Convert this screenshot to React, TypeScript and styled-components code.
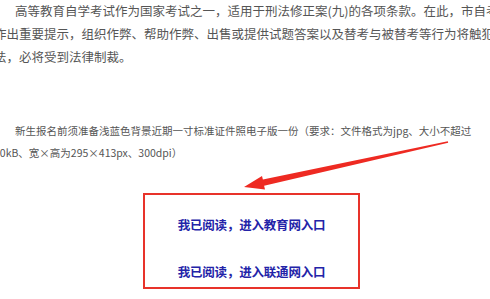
import React from 'react';
import styled, { createGlobalStyle } from 'styled-components';

const GlobalStyle = createGlobalStyle`
  html, body {
    margin: 0;
    padding: 0;
    background: #ffffff;
    overflow: hidden;
  }
  body {
    font-family: "Noto Sans CJK SC", "Noto Sans", sans-serif;
  }
`;

const Page = styled.div`
  position: relative; /* arrow overlay sits on top */
  width: 490px;
  height: 299px;
  overflow: hidden;
`;

const Para = styled.p<{ $top: number; $lh: number; $size: number; $shift: number }>`
  margin: ${(p) => p.$top}px 0 0 ${(p) => p.$shift}px;
  font-size: ${(p) => p.$size}px;
  line-height: ${(p) => p.$lh}px;
  color: #555;
  white-space: nowrap;
`;

const Indent = styled.span<{ $w: number }>`
  padding-left: ${(p) => p.$w}px;
`;

const LinkBox = styled.div`
  box-sizing: border-box;
  width: 217px;
  height: 96px;
  margin: 29px 0 0 143px;
  border: 2px solid #e8332a;
  display: flex;
  flex-direction: column;
  align-items: center;
  padding-top: 22px;
  gap: 31px;
`;

const EntryLink = styled.a`
  font-family: "Noto Sans CJK SC", sans-serif;
  font-weight: 700;
  font-size: 12.5px;
  line-height: 16px;
  color: #2323a8;
  text-decoration: none;
  letter-spacing: -0.2px;
`;

const Arrow = styled.svg`
  position: absolute;
  left: 0;
  top: 0;
  pointer-events: none;
`;

export default function App() {
  return (
    <>
      <GlobalStyle />
      <Page>
        <Para $top={-1} $lh={23} $size={12.5} $shift={-6}>
          <Indent $w={21} />高等教育自学考试作为国家考试之一，适用于刑法修正案(九)的各项条款。在此，市自考办
          <br />
          作出重要提示，组织作弊、帮助作弊、出售或提供试题答案以及替考与被替考等行为将触犯刑
          <br />
          法，必将受到法律制裁。
        </Para>
        <Para $top={52} $lh={22} $size={10.5} $shift={-6}>
          <Indent $w={21} />新生报名前须准备浅蓝色背景近期一寸标准证件照电子版一份（要求：文件格式为jpg、大小不超过
          <br />
          20kB、宽×高为295×413px、300dpi）
        </Para>
        <LinkBox>
          <EntryLink href="#">我已阅读，进入教育网入口</EntryLink>
          <EntryLink href="#">我已阅读，进入联通网入口</EntryLink>
        </LinkBox>
        <Arrow width="490" height="299" viewBox="0 0 490 299">
          <polygon
            points="448.2,142.8 447.8,141.2 262.9,179.6 262,175.9 244,187 265,189.5 264.1,185.8"
            fill="#ee2a22"
          />
        </Arrow>
      </Page>
    </>
  );
}
